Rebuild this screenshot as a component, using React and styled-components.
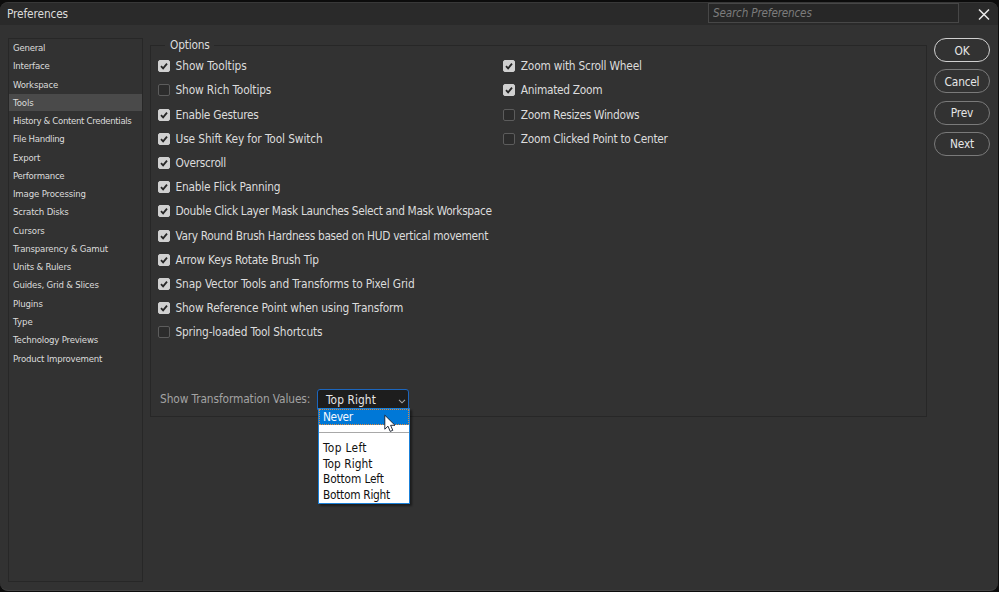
import React, { useState } from "react";
import styled, { createGlobalStyle } from "styled-components";

const GlobalStyle = createGlobalStyle`
  * {
    box-sizing: border-box;
  }
  body {
    margin: 0;
    background: #0c0c0c;
    overflow: hidden;
  }
  button {
    font: inherit;
  }
`;
const Window = styled.div`
  width: 999px;
  height: 592px;
  padding: 2px 1px 1px 0;
  background: #0c0c0c;
  font-family: "DejaVu Sans Condensed", "DejaVu Sans", sans-serif;
  font-stretch: condensed;
  font-size: 11.8px;
  color: #dcdcdc;
`;
const Frame = styled.div`
  height: 589px;
  display: flex;
  flex-direction: column;
  background: #323232;
  border-radius: 8px;
  border-top: 1px solid #383838;
  border-bottom: 1px solid #444444;
  overflow: hidden;
`;
const TitleBar = styled.header`
  height: 22px;
  flex: none;
  display: flex;
  align-items: flex-start;
  background: #2a2a2a;
`;
const Title = styled.h1`
  flex: 1;
  margin: 0;
  padding-left: 7px;
  font-size: 11.8px;
  line-height: 22px;
  font-weight: normal;
  letter-spacing: -0.12px;
`;
const SearchInput = styled.input`
  width: 251px;
  height: 20px;
  padding: 0 0 0 4px;
  background: #272727;
  border: 1px solid #474747;
  outline: none;
  color: #dcdcdc;
  font-family: inherit;
  font-stretch: inherit;
  font-size: 11.6px;
  font-style: italic;
  letter-spacing: -0.15px;

  &::placeholder {
    color: #7c7c7c;
    opacity: 1;
  }
`;
const CloseButton = styled.button`
  width: 39px;
  height: 22px;
  padding: 6px 0 0 19px;
  display: flex;
  background: none;
  border: none;
  color: #e8e8e8;
`;
const Body = styled.div`
  flex: 1;
  display: flex;
  align-items: flex-start;
  padding: 13px 0 0 8px;
`;
const Sidebar = styled.nav`
  width: 135px;
  height: 544px;
  border: 1px solid #272727;
  font-family: "DejaVu Sans", sans-serif;
  font-stretch: normal;
  font-size: 8.6px;
`;
const SidebarItem = styled.div`
  height: 18.27px;
  padding-left: 4px;
  line-height: 18.27px;
  letter-spacing: ${(props) => props.$spacing || 0}px;
  white-space: nowrap;
  background: ${(props) => (props.$active ? "linear-gradient(#4a4a4a, #4a4a4a) 0 0 / 100% 17px no-repeat" : "none")};
`;
const Group = styled.fieldset`
  width: 777px;
  height: 379px;
  min-width: 0;
  margin: 0 0 0 7px;
  padding: 0;
  border: 1px solid #272727;
`;
const Legend = styled.legend`
  height: 15px;
  margin-left: 14px;
  padding: 0 4px 0 5px;
  line-height: 15px;
  letter-spacing: -0.2px;
`;
const Columns = styled.div`
  height: 336px;
  display: grid;
  grid-template-columns: 345.3px 1fr;
  align-items: start;
  padding: 1.2px 0 0 7px;
`;
const Option = styled.label`
  height: 24.2px;
  display: flex;
  align-items: center;
  letter-spacing: ${(props) => props.$spacing || 0}px;
  white-space: nowrap;
`;
const CheckBox = styled.span`
  width: 12px;
  height: 12px;
  flex: none;
  margin-right: 5.5px;
  display: flex;
  align-items: center;
  justify-content: center;
  border-radius: 2px;
  border: 1px solid ${(props) => (props.$checked ? "#d0d0d0" : "#5c5c5c")};
  background: ${(props) => (props.$checked ? "#d0d0d0" : "#2c2c2c")};
  color: #262626;
`;
const TransformRow = styled.div`
  display: flex;
  align-items: center;
  padding-left: 9px;
  color: #a3a3a3;
`;
const TransformLabel = styled.span`
  width: 157px;
  padding-bottom: 1px;
  white-space: nowrap;
  line-height: 18px;
  letter-spacing: -0.1px;
`;
const SelectWrap = styled.div`
  position: relative;
  width: 92px;
`;
const SelectBox = styled.div`
  height: 21px;
  padding: 0 2px 0 8px;
  display: flex;
  align-items: center;
  justify-content: space-between;
  background: #1d1d1d;
  border: 1px solid #1c66bd;
  border-radius: 3px 3px 0 0;
  color: #e6e6e6;
  letter-spacing: 0.1px;
`;
const Chevron = styled.svg`
  margin-top: 3px;
`;
const Menu = styled.div`
  position: absolute;
  left: 1px;
  top: 19px;
  width: 92px;
  height: 96px;
  padding-bottom: 1px;
  background: #ffffff;
  border: 1px solid #1a80d8;
  box-shadow: 2px 2px 2px rgba(0, 0, 0, 0.45);
  color: #111111;
`;
const MenuItem = styled.div`
  height: ${(props) => (props.$active ? 16 : 15.6)}px;
  padding-left: ${(props) => (props.$active ? 3 : 4)}px;
  line-height: ${(props) => (props.$active ? 14 : 15.6)}px;
  letter-spacing: ${(props) => props.$spacing || 0}px;
  white-space: nowrap;
  border: ${(props) => (props.$active ? "1px dotted #e08a3c" : "none")};
  background: ${(props) => (props.$active ? "#0078d7" : "none")};
  color: ${(props) => (props.$active ? "#f4f8ff" : "inherit")};
`;
const MenuDivider = styled.div`
  height: 16px;
  padding-top: 7px;

  &::after {
    content: "";
    display: block;
    border-top: 1px solid #a8a8a8;
  }
`;
const Pointer = styled.svg`
  position: absolute;
  left: 67px;
  top: 25px;
`;
const Actions = styled.div`
  margin-left: 7px;
  display: flex;
  flex-direction: column;
  gap: 7.3px;
`;
const ActionButton = styled.button`
  width: 56px;
  height: 24px;
  padding: 1px 0 0;
  background: none;
  border: ${(props) => (props.$primary ? "1.5px solid #d0d0d0" : "1px solid #7a7a7a")};
  border-radius: 12px;
  color: #e6e6e6;
  line-height: 20px;
  letter-spacing: -0.2px;
`;

const categories = [
  { name: "General", spacing: -0.25 },
  { name: "Interface", spacing: -0.22 },
  { name: "Workspace", spacing: -0.22 },
  { name: "Tools", spacing: -0.1 },
  { name: "History & Content Credentials", spacing: -0.34 },
  { name: "File Handling", spacing: -0.3 },
  { name: "Export", spacing: -0.17 },
  { name: "Performance", spacing: -0.28 },
  { name: "Image Processing", spacing: -0.17 },
  { name: "Scratch Disks", spacing: -0.2 },
  { name: "Cursors", spacing: -0.15 },
  { name: "Transparency & Gamut", spacing: -0.18 },
  { name: "Units & Rulers", spacing: -0.2 },
  { name: "Guides, Grid & Slices", spacing: -0.21 },
  { name: "Plugins", spacing: -0.15 },
  { name: "Type", spacing: 0 },
  { name: "Technology Previews", spacing: -0.2 },
  { name: "Product Improvement", spacing: -0.21 },
];

const toolOptions = [
  { label: "Show Tooltips", checked: true, spacing: -0.04 },
  { label: "Show Rich Tooltips", checked: false, spacing: -0.13 },
  { label: "Enable Gestures", checked: true, spacing: -0.25 },
  { label: "Use Shift Key for Tool Switch", checked: true, spacing: -0.1 },
  { label: "Overscroll", checked: true, spacing: -0.3 },
  { label: "Enable Flick Panning", checked: true, spacing: -0.22 },
  { label: "Double Click Layer Mask Launches Select and Mask Workspace", checked: true, spacing: -0.33 },
  { label: "Vary Round Brush Hardness based on HUD vertical movement", checked: true, spacing: -0.32 },
  { label: "Arrow Keys Rotate Brush Tip", checked: true, spacing: -0.25 },
  { label: "Snap Vector Tools and Transforms to Pixel Grid", checked: true, spacing: -0.14 },
  { label: "Show Reference Point when using Transform", checked: true, spacing: -0.18 },
  { label: "Spring-loaded Tool Shortcuts", checked: false, spacing: -0.18 },
];

const zoomOptions = [
  { label: "Zoom with Scroll Wheel", checked: true, spacing: -0.21 },
  { label: "Animated Zoom", checked: true, spacing: -0.28 },
  { label: "Zoom Resizes Windows", checked: false, spacing: -0.28 },
  { label: "Zoom Clicked Point to Center", checked: false, spacing: -0.29 },
];

const positions = [
  { name: "Top Left", spacing: 0.35 },
  { name: "Top Right", spacing: 0.05 },
  { name: "Bottom Left", spacing: -0.13 },
  { name: "Bottom Right", spacing: -0.28 },
];

function OptionList({ items }) {
  const [options, setOptions] = useState(items);

  const toggle = (label) => {
    setOptions(options.map((o) => (o.label === label ? { ...o, checked: !o.checked } : o)));
  };

  return (
    <div>
      {options.map((option) => (
        <Option key={option.label} $spacing={option.spacing} onClick={() => toggle(option.label)}>
          <CheckBox $checked={option.checked}>
            {option.checked && (
              <svg width="8" height="8" viewBox="0 0 8 8" fill="none">
                <path d="M1 4.2L3.1 6.4L7 1.6" stroke="currentColor" strokeWidth="1.8" />
              </svg>
            )}
          </CheckBox>
          {option.label}
        </Option>
      ))}
    </div>
  );
}

function App() {
  const [active, setActive] = useState("Tools");

  return (
    <Window>
      <GlobalStyle />
      <Frame>
        <TitleBar>
          <Title>Preferences</Title>
          <SearchInput placeholder="Search Preferences" />
          <CloseButton>
            <svg width="12" height="11" viewBox="0 0 12 11" fill="none">
              <path d="M1 0.5L11 10.5M11 0.5L1 10.5" stroke="currentColor" strokeWidth="1.5" />
            </svg>
          </CloseButton>
        </TitleBar>
        <Body>
          <Sidebar>
            {categories.map(({ name, spacing }) => (
              <SidebarItem
                key={name}
                $active={name === active}
                $spacing={spacing}
                onClick={() => setActive(name)}
              >
                {name}
              </SidebarItem>
            ))}
          </Sidebar>
          <Group>
            <Legend>Options</Legend>
            <Columns>
              <OptionList items={toolOptions} />
              <OptionList items={zoomOptions} />
            </Columns>
            <TransformRow>
              <TransformLabel>Show Transformation Values:</TransformLabel>
              <SelectWrap>
                <SelectBox>
                  Top Right
                  <Chevron width="8" height="5" viewBox="0 0 8 5" fill="none">
                    <path d="M1 0.8L4 3.8L7 0.8" stroke="#a8a8a8" strokeWidth="1.1" />
                  </Chevron>
                </SelectBox>
                <Menu>
                  <MenuItem $active $spacing={-0.4}>Never</MenuItem>
                  <MenuDivider />
                  {positions.map((p) => (
                    <MenuItem key={p.name} $spacing={p.spacing}>{p.name}</MenuItem>
                  ))}
                </Menu>
                <Pointer width="12" height="19" viewBox="0 0 12 19">
                  <path
                    d="M0.8 1.2V15.2L4 12.2L6.2 17.4L8.8 16.3L6.6 11.3H11Z"
                    fill="#ffffff"
                    stroke="#101828"
                    strokeWidth="0.9"
                  />
                </Pointer>
              </SelectWrap>
            </TransformRow>
          </Group>
          <Actions>
            <ActionButton $primary>OK</ActionButton>
            <ActionButton>Cancel</ActionButton>
            <ActionButton>Prev</ActionButton>
            <ActionButton>Next</ActionButton>
          </Actions>
        </Body>
      </Frame>
    </Window>
  );
}

export default App;
